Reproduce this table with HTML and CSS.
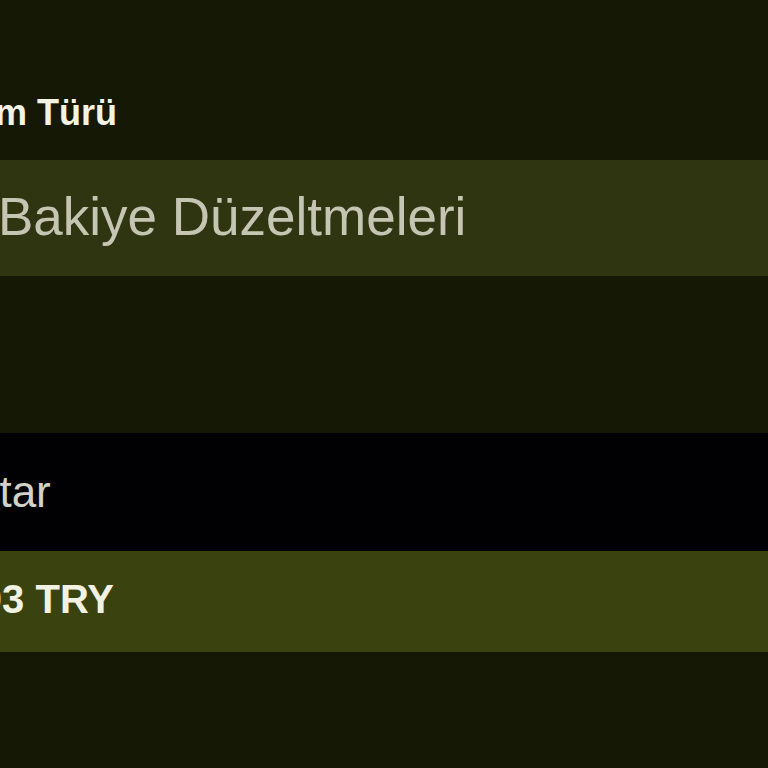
FILE: index.html
```html
<!DOCTYPE html>
<html lang="tr">
<head>
<meta charset="utf-8">
<title>Bakiye Düzeltmeleri</title>
<link rel="stylesheet" href="styles.css">
</head>
<body>
<main class="page">
  <section class="field">
    <div class="label"><span class="shift-label">İşlem Türü</span></div>
    <div class="select"><span class="shift-select">Bakiye Düzeltmeleri</span></div>
  </section>
  <div class="spacer"></div>
  <section class="table">
    <div class="thead"><span class="shift-head">Miktar</span></div>
    <div class="trow"><span class="shift-cell">100,03 TRY</span></div>
  </section>
</main>
</body>
</html>
```
FILE: styles.css
```css
html, body {
  margin: 0;
  padding: 0;
  background: #161806;
  overflow: hidden;
}
.page {
  font-family: "Liberation Sans", Arial, sans-serif;
  width: 768px;
  height: 768px;
  overflow: hidden;
}
.field {
  display: flex;
  flex-direction: column;
}
.label {
  padding-top: 91px;
  padding-bottom: 26px;
  height: 43px;
  line-height: 43px;
  font-size: 36px;
  font-weight: bold;
  color: #f3f3e5;
  white-space: nowrap;
}
.shift-label { margin-left: -65px; }
.select {
  height: 116px;
  background: #2e3510;
  display: flex;
  align-items: center;
  font-size: 53px;
  color: #c4c5b2;
  white-space: nowrap;
  padding-bottom: 4px;
  box-sizing: border-box;
}
.shift-select { margin-left: -2px; }
.spacer { height: 157px; }
.thead {
  height: 118px;
  background: #010103;
  display: flex;
  align-items: center;
  font-size: 44px;
  color: #d2d3c8;
  white-space: nowrap;
}
.shift-head { margin-left: -69px; }
.trow {
  height: 101px;
  background: #3a4210;
  display: flex;
  align-items: center;
  font-size: 40px;
  font-weight: bold;
  color: #f2f2e2;
  white-space: nowrap;
  padding-bottom: 5px;
  box-sizing: border-box;
}
.shift-cell { margin-left: -98px; }
```
